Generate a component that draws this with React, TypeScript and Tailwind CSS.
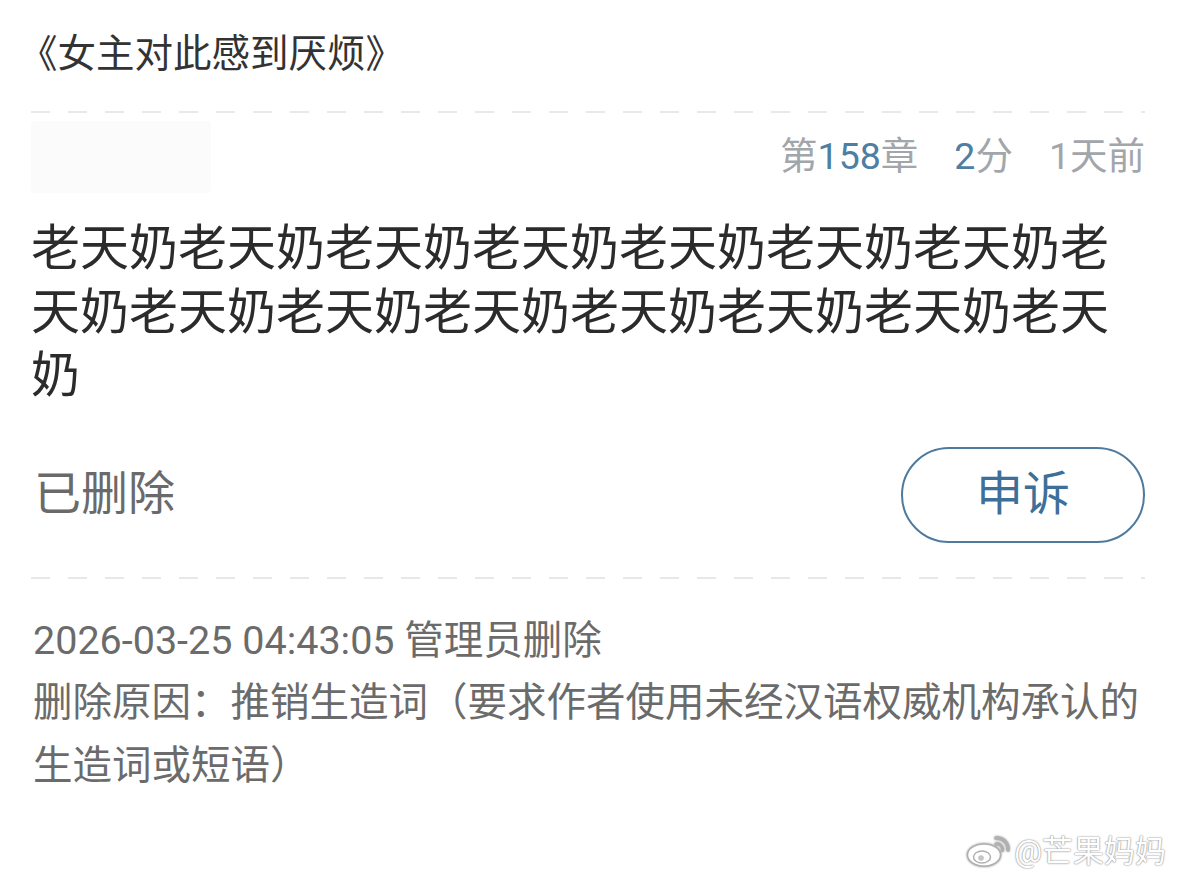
const cjk = { fontFamily: 'Roboto, "Noto Sans CJK SC", "Noto Sans", sans-serif' };

function Dashed({ className = "" }: { className?: string }) {
  return (
    <div
      className={`h-[2px] w-full bg-[repeating-linear-gradient(90deg,#e6e8ea_0_19px,transparent_19px_37px)] ${className}`}
    />
  );
}

function WeiboMark() {
  return (
    <svg width="46" height="32" viewBox="0 0 46 32" className="drop-shadow-[0_0_1px_#8f8f8f]">
      <ellipse cx="18" cy="20" rx="16.5" ry="11" fill="#fff" stroke="#b0b0b0" strokeWidth="1.5" />
      <ellipse cx="16" cy="22" rx="8.5" ry="6" fill="#fff" stroke="#b0b0b0" strokeWidth="1.5" />
      <circle cx="15" cy="23" r="2.8" fill="#c4c4c4" />
      <path d="M30 3 a11 11 0 0 1 12 12" fill="none" stroke="#b0b0b0" strokeWidth="3.5" strokeLinecap="round" />
      <path d="M30 9 a5.5 5.5 0 0 1 6.5 6.5" fill="none" stroke="#b0b0b0" strokeWidth="3" strokeLinecap="round" />
    </svg>
  );
}

export default function App() {
  return (
    <div className="relative h-[883px] w-[1179px] overflow-hidden bg-white" style={cjk}>
      <div className="pl-[31px] pr-[34px]">
        {/* book title */}
        <div className="-ml-[12px] pt-[28px] text-[38.5px] leading-[52px] text-[#333]">《女主对此感到厌烦》</div>

        <Dashed className="mt-[31px]" />

        {/* blurred user + meta */}
        <div className="mt-[4px] flex h-[80px] items-center justify-between">
          <div className="h-[72px] w-[180px] rounded bg-[#fbfbfb]" />
          <div className="flex items-center gap-[36px] text-[37.5px] leading-none text-[#a2a6aa]">
            <span>
              第<span className="text-[#4f7ea3]">158</span>章
            </span>
            <span>
              <span className="text-[#4f7ea3]">2</span>分
            </span>
            <span>1天前</span>
          </div>
        </div>

        {/* comment body */}
        <p className="mt-[20px] break-all text-[49px] leading-[63.5px] text-[#2b2b2b]">
          {"老天奶".repeat(15)}
        </p>

        {/* status row */}
        <div className="mt-[39px] flex items-center justify-between">
          <span className="pl-[3px] text-[47px] text-[#6a6a6a]">已删除</span>
          <button className="flex h-[96px] w-[244px] items-center justify-center rounded-full border-[2.5px] border-[#4e7a9e] text-[47px] text-[#3e6f99]">
            申诉
          </button>
        </div>

        <Dashed className="mt-[34px]" />

        {/* deletion note */}
        <div className="mt-[31px] text-[39.5px] leading-[62.5px] text-[#6b6b6b]">
          <div className="pl-[2px]">2026-03-25 04:43:05 管理员删除</div>
          <div className="pl-[2px]">删除原因：推销生造词（要求作者使用未经汉语权威机构承认的生造词或短语）</div>
        </div>
      </div>

      {/* watermark */}
      <div className="absolute bottom-[16px] right-[13px] flex items-center gap-[2px]">
        <WeiboMark />
        <span className="text-[31px] leading-none text-white [text-shadow:0_0_2px_#8c8c8c,0_0_1px_#8c8c8c]">
          @芒果妈妈
        </span>
      </div>
    </div>
  );
}
